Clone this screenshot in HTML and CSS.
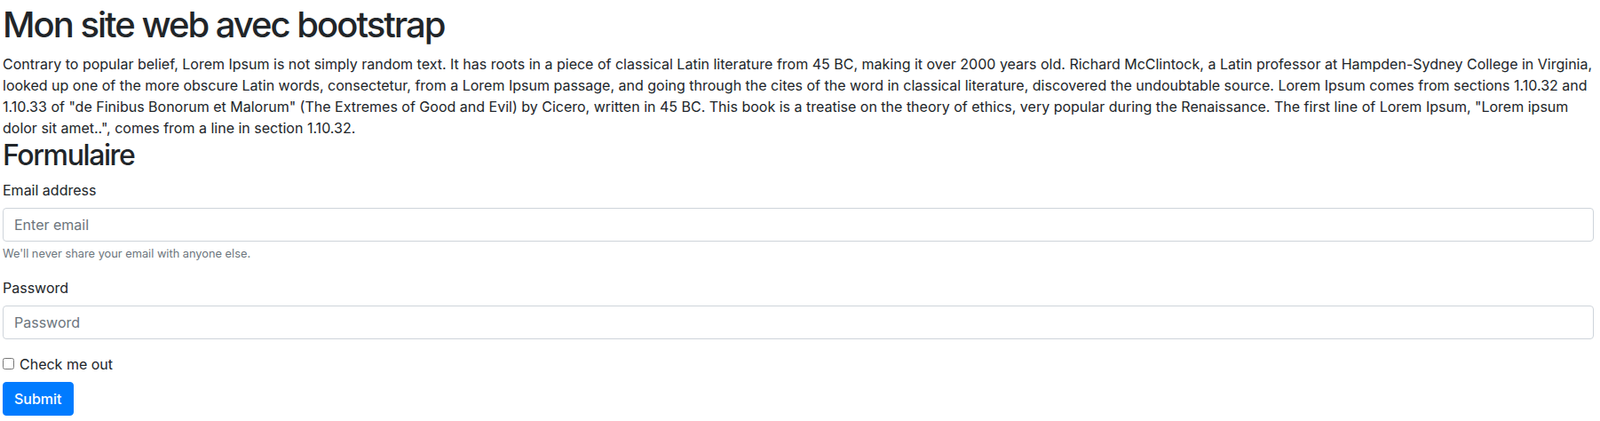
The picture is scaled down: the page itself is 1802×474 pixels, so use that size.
FILE: index.html
```html
<!DOCTYPE html>
<html lang="fr">
<head>
<meta charset="utf-8">
<title>Mon site web avec bootstrap</title>
<link rel="stylesheet" href="styles.css">
</head>
<body>
<div class="container">
  <h1 class="title">Mon site web avec bootstrap</h1>
  <p class="lead-text">Contrary to popular belief, Lorem Ipsum is not simply random text. It has roots in a piece of classical Latin literature from 45 BC, making it over 2000 years old. Richard McClintock, a Latin professor at Hampden-Sydney College in Virginia, looked up one of the more obscure Latin words, consectetur, from a Lorem Ipsum passage, and going through the cites of the word in classical literature, discovered the undoubtable source. Lorem Ipsum comes from sections 1.10.32 and 1.10.33 of "de Finibus Bonorum et Malorum" (The Extremes of Good and Evil) by Cicero, written in 45 BC. This book is a treatise on the theory of ethics, very popular during the Renaissance. The first line of Lorem Ipsum, "Lorem ipsum dolor sit amet..", comes from a line in section 1.10.32.</p>
  <h2 class="subtitle">Formulaire</h2>
  <form class="form" onsubmit="return false;">
    <div class="form-group">
      <label class="label" for="email">Email address</label>
      <input class="form-control" type="email" id="email" placeholder="Enter email">
      <small class="form-text">We'll never share your email with anyone else.</small>
    </div>
    <div class="form-group">
      <label class="label" for="password">Password</label>
      <input class="form-control" type="password" id="password" placeholder="Password">
    </div>
    <div class="form-check">
      <input class="check-input" type="checkbox" id="check">
      <label class="check-label" for="check">Check me out</label>
    </div>
    <button type="submit" class="btn-primary">Submit</button>
  </form>
</div>
</body>
</html>
```
FILE: styles.css
```css
* { box-sizing: border-box; }
html, body { margin: 0; padding: 0; }
body {
  font-family: Inter, "Liberation Sans", sans-serif;
  font-size: 16px;
  line-height: 1.5;
  color: #212529;
  background: #fff;
}
.container {
  padding: 4px 7px 0 3px;
}
.title {
  font-size: 40px;
  font-weight: 500;
  line-height: 1.2;
  letter-spacing: -2px;
  margin: 0 0 8px;
}
.lead-text {
  margin: 0;
}
.subtitle {
  font-size: 32px;
  font-weight: 500;
  line-height: 1.2;
  letter-spacing: -1.4px;
  margin: 0 0 8px;
}
.form-group {
  margin-bottom: 16px;
}
.label {
  display: inline-block;
  margin-bottom: 8px;
}
.form-control {
  display: block;
  width: 100%;
  height: 38px;
  padding: 6px 12px;
  font-family: inherit;
  font-size: 16px;
  line-height: 1.5;
  color: #495057;
  background: #fff;
  border: 1px solid #ced4da;
  border-radius: 4px;
}
.form-control::placeholder {
  color: #6c757d;
  opacity: 1;
}
.form-text {
  display: block;
  margin-top: 4px;
  font-size: 12.8px;
  color: #6c757d;
}
.form-check {
  display: flex;
  align-items: center;
  margin-bottom: 8px;
}
.check-input {
  margin: 0 6px 0 0;
  width: 13px;
  height: 13px;
}
.btn-primary {
  display: inline-block;
  padding: 6px 12px;
  font-family: inherit;
  font-size: 16px;
  line-height: 1.5;
  font-weight: 500;
  color: #fff;
  background: #007bff;
  border: 1px solid #007bff;
  border-radius: 4px;
}
```
